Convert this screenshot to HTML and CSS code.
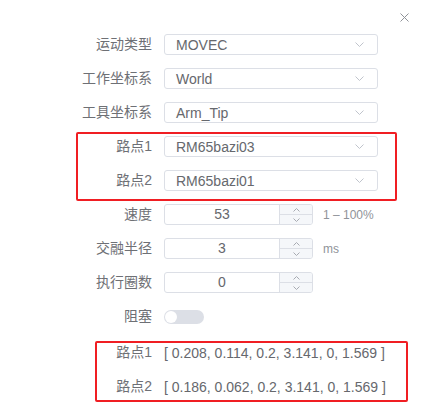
FILE: index.html
```html
<!DOCTYPE html>
<html lang="zh-CN">
<head>
<meta charset="utf-8">
<title>MOVEC</title>
<link rel="stylesheet" href="styles.css">
</head>
<body>
<div class="dialog">
  <div class="header">
    <span class="close">
      <svg width="9" height="9" viewBox="0 0 9 9"><path d="M0.5 0.5 L8.5 8.5 M8.5 0.5 L0.5 8.5" stroke="#909399" stroke-width="1" fill="none"/></svg>
    </span>
  </div>
  <div class="form">
    <div class="row">
      <label class="label">运动类型</label>
      <div class="select"><span>MOVEC</span><svg class="chev" width="9" height="5" viewBox="0 0 9 5"><path d="M0.5 0.5 L4.5 4.5 L8.5 0.5" stroke="#c0c4cc" fill="none"/></svg></div>
    </div>
    <div class="row">
      <label class="label">工作坐标系</label>
      <div class="select"><span>World</span><svg class="chev" width="9" height="5" viewBox="0 0 9 5"><path d="M0.5 0.5 L4.5 4.5 L8.5 0.5" stroke="#c0c4cc" fill="none"/></svg></div>
    </div>
    <div class="row">
      <label class="label">工具坐标系</label>
      <div class="select"><span>Arm_Tip</span><svg class="chev" width="9" height="5" viewBox="0 0 9 5"><path d="M0.5 0.5 L4.5 4.5 L8.5 0.5" stroke="#c0c4cc" fill="none"/></svg></div>
    </div>
    <div class="group group-points">
      <div class="row">
        <label class="label">路点1</label>
        <div class="select"><span>RM65bazi03</span><svg class="chev" width="9" height="5" viewBox="0 0 9 5"><path d="M0.5 0.5 L4.5 4.5 L8.5 0.5" stroke="#c0c4cc" fill="none"/></svg></div>
      </div>
      <div class="row">
        <label class="label">路点2</label>
        <div class="select"><span>RM65bazi01</span><svg class="chev" width="9" height="5" viewBox="0 0 9 5"><path d="M0.5 0.5 L4.5 4.5 L8.5 0.5" stroke="#c0c4cc" fill="none"/></svg></div>
      </div>
    </div>
    <div class="row">
      <label class="label">速度</label>
      <div class="number">
        <span class="num-value">53</span>
        <span class="spin">
          <span class="spin-btn"><svg width="7" height="4" viewBox="0 0 7 4"><path d="M0.5 3.5 L3.5 0.5 L6.5 3.5" stroke="#a8abb2" fill="none"/></svg></span>
          <span class="spin-btn"><svg width="7" height="4" viewBox="0 0 7 4"><path d="M0.5 0.5 L3.5 3.5 L6.5 0.5" stroke="#a8abb2" fill="none"/></svg></span>
        </span>
      </div>
      <span class="hint">1 – 100%</span>
    </div>
    <div class="row">
      <label class="label">交融半径</label>
      <div class="number">
        <span class="num-value">3</span>
        <span class="spin">
          <span class="spin-btn"><svg width="7" height="4" viewBox="0 0 7 4"><path d="M0.5 3.5 L3.5 0.5 L6.5 3.5" stroke="#a8abb2" fill="none"/></svg></span>
          <span class="spin-btn"><svg width="7" height="4" viewBox="0 0 7 4"><path d="M0.5 0.5 L3.5 3.5 L6.5 0.5" stroke="#a8abb2" fill="none"/></svg></span>
        </span>
      </div>
      <span class="hint">ms</span>
    </div>
    <div class="row">
      <label class="label">执行圈数</label>
      <div class="number">
        <span class="num-value">0</span>
        <span class="spin">
          <span class="spin-btn"><svg width="7" height="4" viewBox="0 0 7 4"><path d="M0.5 3.5 L3.5 0.5 L6.5 3.5" stroke="#a8abb2" fill="none"/></svg></span>
          <span class="spin-btn"><svg width="7" height="4" viewBox="0 0 7 4"><path d="M0.5 0.5 L3.5 3.5 L6.5 0.5" stroke="#a8abb2" fill="none"/></svg></span>
        </span>
      </div>
    </div>
    <div class="row">
      <label class="label">阻塞</label>
      <span class="switch"><span class="knob"></span></span>
    </div>
    <div class="group group-values">
      <div class="row">
        <label class="label">路点1</label>
        <span class="text-value">[ 0.208, 0.114, 0.2, 3.141, 0, 1.569 ]</span>
      </div>
      <div class="row">
        <label class="label">路点2</label>
        <span class="text-value">[ 0.186, 0.062, 0.2, 3.141, 0, 1.569 ]</span>
      </div>
    </div>
  </div>
</div>
</body>
</html>
```

FILE: styles.css
```css
html, body {
  margin: 0;
  padding: 0;
  background: #ffffff;
}

body {
  font-family: "Liberation Sans", "Noto Sans CJK SC", sans-serif;
  font-size: 14px;
  color: #66686d;
}

.dialog {
  width: 426px;
  height: 420px;
  background: #ffffff;
}

.header {
  height: 34px;
  display: flex;
  justify-content: flex-end;
  align-items: center;
  padding-right: 17px;
  box-sizing: border-box;
}

.close {
  display: flex;
  width: 9px;
  height: 9px;
}

.form {
  display: flex;
  flex-direction: column;
  gap: 13px;
}

.group {
  position: relative;
  display: flex;
  flex-direction: column;
  gap: 13px;
}

.group::after {
  content: "";
  position: absolute;
  border: 2px solid #f01e23;
  border-radius: 2px;
  pointer-events: none;
}

.group-points::after {
  top: -4px;
  bottom: -10px;
  left: 76px;
  right: 29px;
}

.group-values {
  margin-top: 2px;
}

.group-values::after {
  top: -1px;
  bottom: -5px;
  left: 95px;
  right: 18px;
}

.row {
  display: flex;
  align-items: center;
  height: 21px;
}

.label {
  width: 164px;
  padding-right: 12px;
  box-sizing: border-box;
  text-align: right;
  flex: none;
  line-height: 21px;
  white-space: nowrap;
  color: #6e7075;
}

.select {
  width: 214px;
  height: 21px;
  box-sizing: border-box;
  border: 1px solid #dcdfe6;
  border-radius: 3px;
  display: flex;
  align-items: center;
  justify-content: space-between;
  padding: 0 13px 0 11px;
}

.chev {
  display: block;
}

.number {
  width: 149px;
  height: 21px;
  box-sizing: border-box;
  border: 1px solid #dcdfe6;
  border-radius: 3px;
  display: flex;
  overflow: hidden;
}

.num-value {
  flex: 1;
  text-align: center;
  line-height: 19px;
}

.spin {
  width: 32px;
  flex: none;
  display: flex;
  flex-direction: column;
  background: #f5f7fa;
  border-left: 1px solid #dcdfe6;
}

.spin-btn {
  flex: 1;
  display: flex;
  align-items: center;
  justify-content: center;
}

.spin-btn + .spin-btn {
  border-top: 1px solid #dcdfe6;
}

.hint {
  margin-left: 10px;
  font-size: 12px;
  color: #909399;
}

.switch {
  position: relative;
  width: 40px;
  height: 14px;
  border-radius: 7px;
  background: #dcdfe6;
  display: flex;
  align-items: center;
  padding-left: 1px;
  box-sizing: border-box;
}

.knob {
  width: 12px;
  height: 12px;
  border-radius: 50%;
  background: #ffffff;
}

.text-value {
  white-space: nowrap;
}
```
